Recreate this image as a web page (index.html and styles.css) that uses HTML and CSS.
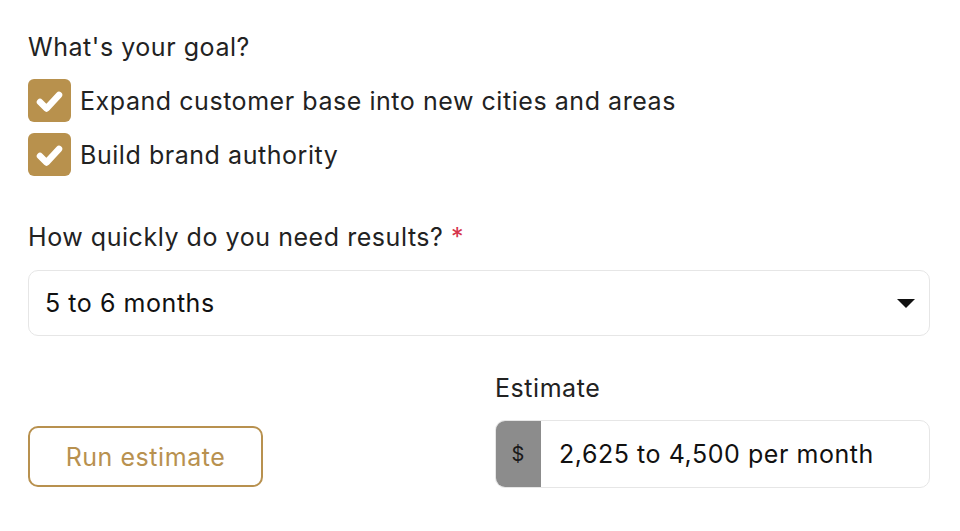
FILE: index.html
```html
<!DOCTYPE html>
<html lang="en">
<head>
<meta charset="utf-8">
<title>Estimate</title>
<link rel="stylesheet" href="styles.css">
</head>
<body>
<form class="form">
  <div class="label">What's your goal?</div>
  <div class="checks">
    <label class="check">
      <span class="box"><svg viewBox="0 0 43 43" width="43" height="43"><polyline points="12,23 18.5,29.5 31,16" fill="none" stroke="#fff" stroke-width="6.5" stroke-linecap="round" stroke-linejoin="round"/></svg></span>
      <span class="check-text">Expand customer base into new cities and areas</span>
    </label>
    <label class="check">
      <span class="box"><svg viewBox="0 0 43 43" width="43" height="43"><polyline points="12,23 18.5,29.5 31,16" fill="none" stroke="#fff" stroke-width="6.5" stroke-linecap="round" stroke-linejoin="round"/></svg></span>
      <span class="check-text">Build brand authority</span>
    </label>
  </div>

  <div class="label label-speed">How quickly do you need results? <span class="req">*</span></div>
  <div class="select">
    <span class="select-value">5 to 6 months</span>
    <svg class="caret" viewBox="0 0 18 9" width="18" height="9"><polygon points="0,0 18,0 9,9" fill="#111"/></svg>
  </div>

  <div class="bottom">
    <div class="col col-left">
      <button type="button" class="btn">Run estimate</button>
    </div>
    <div class="col">
      <div class="label">Estimate</div>
      <div class="group">
        <span class="prefix">$</span>
        <span class="group-value">2,625 to 4,500 per month</span>
      </div>
    </div>
  </div>
</form>
</body>
</html>
```

FILE: styles.css
```css
* { box-sizing: border-box; }

html, body {
  margin: 0;
  background: #ffffff;
}

body {
  font-family: Inter, "Noto Sans", "Liberation Sans", sans-serif;
  font-size: 25px;
  line-height: 28px;
  letter-spacing: 0.55px;
  color: #222222;
}

.form {
  width: 960px;
  padding: 33px 30px 0 28px;
}

.label {
  height: 28px;
  color: #222222;
}

.checks {
  display: flex;
  flex-direction: column;
  gap: 11px;
  margin-top: 18px;
}

.check {
  display: flex;
  align-items: center;
  gap: 9px;
  height: 43px;
}

.box {
  width: 43px;
  height: 43px;
  border-radius: 6px;
  background: #b8914d;
  display: flex;
}

.check-text {
  color: #222222;
}

.label-speed {
  margin-top: 47px;
}

.req {
  color: #d6334b;
}

.select {
  margin-top: 19px;
  height: 66px;
  border: 1px solid #e6e6e6;
  border-radius: 10px;
  display: flex;
  align-items: center;
  justify-content: space-between;
  padding: 0 14px 0 16px;
  color: #111111;
}

.bottom {
  display: grid;
  grid-template-columns: 435px 435px;
  column-gap: 32px;
  margin-top: 38px;
}

.col {
  display: flex;
  flex-direction: column;
}

.col-left {
  justify-content: flex-end;
}

.col .label {
  margin-bottom: 18px;
}

.btn {
  width: 235px;
  height: 61px;
  border: 2px solid #b8914f;
  border-radius: 10px;
  background: #ffffff;
  color: #b8914f;
  font-family: inherit;
  font-size: 25px;
  letter-spacing: 0.55px;
  padding: 0;
  margin-bottom: 1px;
}

.group {
  display: flex;
  height: 68px;
  border: 1px solid #e6e6e6;
  border-radius: 10px;
  overflow: hidden;
}

.prefix {
  width: 46px;
  background: #8c8c8c;
  color: #1a1a1a;
  font-size: 20px;
  letter-spacing: 0;
  display: flex;
  align-items: center;
  justify-content: center;
  margin: -1px 0 -1px -1px;
}

.group-value {
  display: flex;
  align-items: center;
  padding-left: 18px;
  color: #111111;
}
```
